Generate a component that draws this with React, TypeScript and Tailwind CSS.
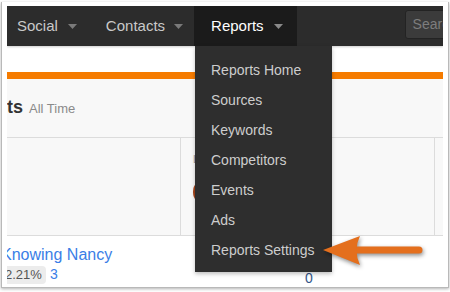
import React from 'react';

const Caret = ({ color = '#7a7a7a' }: { color?: string }) => (
  <svg width="9" height="5" viewBox="0 0 9 5" className="shrink-0">
    <path d="M0 0 L9 0 L4.5 5 Z" fill={color} />
  </svg>
);

const reportItems = [
  'Reports Home',
  'Sources',
  'Keywords',
  'Competitors',
  'Events',
  'Ads',
  'Reports Settings',
];

export default function App() {
  return (
    <div className="w-[450px] h-[292px] bg-white overflow-hidden font-['Liberation_Sans',Arial,sans-serif]">
      {/* screenshot frame */}
      <div className="ml-[1px] mt-[2px] w-[448px] h-[286px] border-x border-b border-[#b9b9b9] shadow-[0_1px_3px_rgba(0,0,0,0.3)] pl-[5px] pt-[4px]">
        <div className="relative w-[436px] h-[281px] overflow-hidden bg-white flex flex-col">
          {/* top nav */}
          <div className="h-[40px] shrink-0 bg-[#2c2c2c] flex items-stretch overflow-hidden shadow-[0_1px_2px_rgba(0,0,0,0.2)] relative z-10">
            <div className="flex items-center gap-[10px] pl-[10px] pr-[14px] text-[15px] text-[#c9c9c9]">
              <span>Social</span>
              <Caret />
            </div>
            <div className="flex items-center gap-[9px] pl-[15px] pr-[11px] text-[15px] text-[#c9c9c9]">
              <span>Contacts</span>
              <Caret />
            </div>
            <div className="flex items-center gap-[10px] pl-[17px] pr-[14px] text-[15px] text-white bg-[#1b1b1b]">
              <span>Reports</span>
              <Caret color="#8a8a8a" />
            </div>
            <div className="ml-[108px] mt-[4px] h-[29px] w-[80px] shrink-0 rounded-[3px] border border-[#232323] bg-[#3b3b3b] flex items-center pl-[7px] text-[14px] text-[#7d7d7d]">
              Search
            </div>
          </div>

          <div className="h-[26px] shrink-0 bg-white" />
          <div className="h-[7px] shrink-0 bg-[#f57b00]" />

          {/* header */}
          <div className="h-[59px] shrink-0 bg-[#f8f8f8] border-b border-[#dcdcdc] flex items-baseline gap-[6px] pt-[15px]">
            <span className="text-[18px] font-bold text-[#333]">ts</span>
            <span className="text-[13px] text-[#8a8a8a]">All Time</span>
          </div>

          {/* stats row */}
          <div className="h-[98px] shrink-0 bg-[#f8f8f8] border-b border-[#dcdcdc] flex">
            <div className="w-[174px] shrink-0 border-r border-[#dcdcdc]" />
            <div className="w-[254px] shrink-0 border-r border-[#dcdcdc] pl-[12px] pt-[17px] flex flex-col gap-[14px]">
              <span className="text-[11px] leading-[9px] text-[#999]">Last</span>
              <div className="w-[28px] h-[28px] rounded-full bg-[#a5441a]" />
            </div>
            <div className="flex-1" />
          </div>

          {/* contact row */}
          <div className="flex-1 bg-white flex pt-[9px]">
            <div className="-ml-[6px] flex flex-col w-[300px]">
              <span className="text-[16px] leading-[19px] text-[#3a7ee6]">Knowing Nancy</span>
              <div className="flex items-center gap-[4px]">
                <span className="rounded-[4px] bg-[#ececec] px-[4px] text-[13px] leading-[18px] text-[#555]">2.21%</span>
                <span className="text-[14px] text-[#3a7ee6]">3</span>
              </div>
            </div>
            <span className="ml-[4px] mt-[25px] text-[14px] leading-[16px] text-[#34568a]">0</span>
          </div>

          {/* Reports dropdown */}
          <div className="absolute left-[188px] top-[40px] w-[137px] h-[226px] bg-[#2e2e2e] pt-[9px] z-20 shadow-[0_2px_4px_rgba(0,0,0,0.25)]">
            {reportItems.map((item) => (
              <div key={item} className="h-[30px] flex items-center pl-[16px] text-[14px] text-[#cdcdcd]">
                {item}
              </div>
            ))}
          </div>

          {/* callout arrow */}
          <svg
            className="absolute left-0 top-0 z-30 drop-shadow-[1px_2px_2px_rgba(0,0,0,0.45)]"
            width="436"
            height="281"
            viewBox="7 6 436 281"
          >
            <line x1="352" y1="250" x2="419" y2="250" stroke="#e46f1d" strokeWidth="7" strokeLinecap="round" />
            <path d="M323 250 L360 236 Q353 250 360 265 Z" fill="#e46f1d" />
          </svg>
        </div>
      </div>
    </div>
  );
}
